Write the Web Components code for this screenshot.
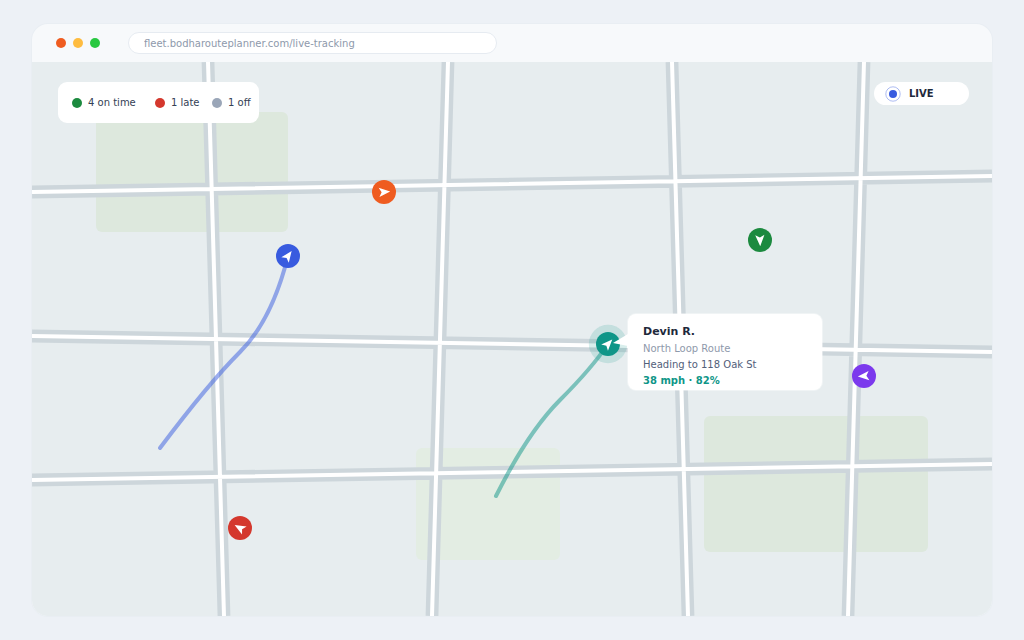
<!DOCTYPE html>
<html lang="en">
<head>
<meta charset="utf-8">
<title>Live tracking</title>
<style>
  body {
    margin: 0;
    padding: 24px 32px;
    background: #edf1f6;
    color: #1e293b;
    font-family: "DejaVu Sans", sans-serif;
  }
</style>
</head>
<body>
<browser-window url="fleet.bodharouteplanner.com/live-tracking">
  <fleet-map>
    <map-pin style="--x:352;--y:130" color="#ef5c20" heading="85" label="Vehicle, orange"></map-pin>
    <map-pin style="--x:256;--y:194" color="#385bdf" heading="36" label="Vehicle, blue"></map-pin>
    <map-pin style="--x:728;--y:178" color="#1c8a3f" heading="178" label="Vehicle, green"></map-pin>
    <map-pin style="--x:832;--y:314" color="#7c3aed" heading="265" label="Vehicle, purple"></map-pin>
    <map-pin style="--x:208;--y:466" color="#d4382d" heading="300" label="Vehicle, red"></map-pin>
    <map-pin style="--x:576;--y:282" color="#0f9688" heading="43" label="Devin R." selected></map-pin>
    <driver-card style="--x:596;--y:252">
      <span slot="name">Devin R.</span>
      <span slot="route">North Loop Route</span>
      <span slot="heading">Heading to 118 Oak St</span>
      <span slot="stats">38 mph · 82%</span>
    </driver-card>
    <status-legend slot="left">
      <status-item color="#1c8a3f">4 on time</status-item>
      <status-item color="#d4382d">1 late</status-item>
      <status-item color="#9aa6b8">1 off</status-item>
    </status-legend>
    <live-badge slot="right">LIVE</live-badge>
  </fleet-map>
</browser-window>

<script>
const define = (name, html, setup) => {
  const template = document.createElement('template');
  template.innerHTML = html;
  customElements.define(name, class extends HTMLElement {
    connectedCallback() {
      if (this.shadowRoot) return;
      this.attachShadow({ mode: 'open' }).append(template.content.cloneNode(true));
      if (setup) setup(this, this.shadowRoot);
    }
  });
};

define('browser-window', `
<style>
  :host { display: block; border-radius: 16px; overflow: hidden; background: #f7f9fb; box-shadow: 0 0 0 1px #e9eef3; }
  header { display: flex; align-items: center; height: 38px; padding: 0 24px; gap: 28px; }
  .lights { display: flex; gap: 7px; }
  .lights i { width: 10px; height: 10px; border-radius: 50%; }
  input {
    box-sizing: border-box; flex: 0 1 369px; min-width: 0; height: 22px; padding: 0 15px;
    border: 1px solid #e6ebf1; border-radius: 11px; background: #fff;
    font: 10px "DejaVu Sans", sans-serif; color: #8e99ab; outline: 0;
  }
</style>
<header>
  <div class="lights">
    <i style="background:#ef5c20"></i><i style="background:#febc40"></i><i style="background:#28c840"></i>
  </div>
  <input type="text" aria-label="Address">
</header>
<slot></slot>`, (host, root) => {
  root.querySelector('input').value = host.getAttribute('url');
});

define('fleet-map', `
<style>
  :host { display: block; position: relative; aspect-ratio: 960 / 554; background: #e7edef; }
  .map { display: block; width: 100%; height: 100%; }
  .tools {
    position: absolute; inset: 20px 23px auto 26px;
    display: flex; justify-content: space-between; align-items: flex-start;
  }
</style>
<svg class="map" viewBox="0 0 960 554" fill="none" aria-hidden="true">
  <g fill="#dde8dd">
    <rect x="64" y="50" width="192" height="120" rx="6"/>
    <rect x="672" y="354" width="224" height="136" rx="6"/>
    <rect x="384" y="386" width="144" height="112" rx="6" fill="#e3ede3"/>
  </g>
  <path stroke="#cdd6db" stroke-width="12.8" d="M0 130L960 114M0 274L960 290M0 418L960 402M176 0L192 554M416 0L400 554M640 0L656 554M832 0L816 554"/>
  <path stroke="#fff" stroke-width="4" d="M0 130L960 114M0 274L960 290M0 418L960 402M176 0L192 554M416 0L400 554M640 0L656 554M832 0L816 554"/>
  <g stroke-width="4" stroke-linecap="round" stroke-opacity=".5">
    <path stroke="#385bdf" d="M128 386Q176 322 208 290T256 194"/>
    <path stroke="#0f9688" d="M464 434Q496 370 528 338T576 282"/>
  </g>
</svg>
<slot></slot>
<div class="tools"><slot name="left"></slot><slot name="right"></slot></div>`);

define('map-pin', `
<style>
  :host {
    position: absolute; width: 40px; height: 40px;
    left: calc(var(--x) / 960 * 100%); top: calc(var(--y) / 554 * 100%);
    transform: translate(-50%, -50%);
  }
  svg { display: block; }
  .halo { display: none; }
  :host([selected]) .halo { display: block; }
</style>
<svg width="40" height="40" viewBox="-20 -20 40 40" role="img">
  <circle class="halo" r="19.2" fill-opacity=".16"/>
  <circle r="12"/>
  <path fill="#fff" d="M0-6.2L4.6 5L0 2.4L-4.6 5Z"/>
</svg>`, (host, root) => {
  const color = host.getAttribute('color');
  root.querySelector('svg').setAttribute('aria-label', host.getAttribute('label'));
  root.querySelectorAll('circle').forEach(c => c.setAttribute('fill', color));
  root.querySelector('path').setAttribute('transform', `rotate(${host.getAttribute('heading')})`);
});

define('driver-card', `
<style>
  :host {
    position: absolute; box-sizing: border-box; width: 194px; padding: 9px 15px 1px;
    left: calc(var(--x) / 960 * 100%); top: calc(var(--y) / 554 * 100%);
    border-radius: 8px; background: #fff; font-size: 10px; line-height: 16px;
    box-shadow: 0 0 0 1px rgba(255,255,255,.4);
  }
  svg { position: absolute; left: -15px; top: 20px; }
  div { white-space: nowrap; }
  .name { font-size: 11px; line-height: 18px; font-weight: bold; color: #1e293b; }
  .route { color: #8e99ab; }
  .heading { color: #52607a; }
  .stats { color: #0f9688; font-weight: bold; }
</style>
<svg width="15" height="12" aria-hidden="true"><path fill="#fff" d="M15 0V12L0 9Z"/></svg>
<div class="name"><slot name="name"></slot></div>
<div class="route"><slot name="route"></slot></div>
<div class="heading"><slot name="heading"></slot></div>
<div class="stats"><slot name="stats"></slot></div>`);

define('status-legend', `
<style>
  :host {
    display: grid; grid-template-columns: 83px 57px auto; align-items: center; box-sizing: border-box;
    width: 201px; height: 41px; padding: 0 8px 0 14px; border-radius: 9px; background: #fff;
  }
</style>
<slot></slot>`);

define('status-item', `
<style>
  :host { display: flex; align-items: center; gap: 6px; font-size: 10px; line-height: 16px; color: #334155; white-space: nowrap; }
  i { width: 10px; height: 10px; border-radius: 50%; }
</style>
<i></i><span><slot></slot></span>`, (host, root) => {
  root.querySelector('i').style.background = host.getAttribute('color');
});

define('live-badge', `
<style>
  :host {
    display: flex; align-items: center; gap: 8px; box-sizing: border-box; width: 95px; height: 23px;
    padding: 0 11px; border-radius: 12px; background: #fff;
    font-size: 10px; line-height: 16px; font-weight: bold; color: #1e293b;
  }
</style>
<svg width="16" height="16" viewBox="-8 -8 16 16" aria-hidden="true">
  <circle r="4" fill="#385bdf"/><circle r="7.2" fill="none" stroke="#385bdf" stroke-width=".8" stroke-opacity=".5"/>
</svg>
<span><slot></slot></span>`);
</script>
</body>
</html>
